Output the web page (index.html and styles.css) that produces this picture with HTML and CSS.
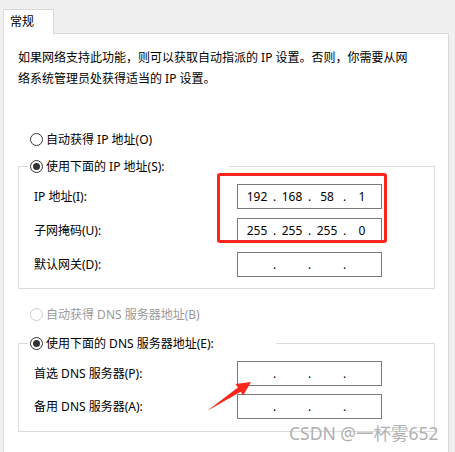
FILE: index.html
```html
<!DOCTYPE html>
<html lang="zh-CN">
<head>
<meta charset="utf-8">
<title>IP 设置</title>
<link rel="stylesheet" href="styles.css">
</head>
<body>
<div class="page">
  <div class="tabstrip">
    <div class="tab">常规</div>
  </div>
  <div class="panel">
    <p class="intro">如果网络支持此功能，则可以获取自动指派的 IP 设置。否则，你需要从网<br>络系统管理员处获得适当的 IP 设置。</p>

    <div class="radio-row first"><span class="radio"></span><span>自动获得 IP 地址(O)</span></div>

    <fieldset class="group group-ip">
      <legend class="legend legend-ip"><span class="radio checked"></span><span>使用下面的 IP 地址(S):</span></legend>
      <div class="fields">
        <span class="label">IP 地址(I):</span>
        <div class="ipbox"><span class="oct">192</span><span class="dot">.</span><span class="oct">168</span><span class="dot">.</span><span class="oct">58</span><span class="dot">.</span><span class="oct">1</span></div>
        <span class="label">子网掩码(U):</span>
        <div class="ipbox"><span class="oct">255</span><span class="dot">.</span><span class="oct">255</span><span class="dot">.</span><span class="oct">255</span><span class="dot">.</span><span class="oct">0</span></div>
        <span class="label">默认网关(D):</span>
        <div class="ipbox"><span class="oct"></span><span class="dot">.</span><span class="oct"></span><span class="dot">.</span><span class="oct"></span><span class="dot">.</span><span class="oct"></span></div>
      </div>
    </fieldset>

    <div class="radio-row disabled"><span class="radio"></span><span>自动获得 DNS 服务器地址(B)</span></div>

    <fieldset class="group group-dns">
      <legend class="legend legend-dns"><span class="radio checked"></span><span>使用下面的 DNS 服务器地址(E):</span></legend>
      <div class="fields dns-fields">
        <span class="label">首选 DNS 服务器(P):</span>
        <div class="ipbox"><span class="oct"></span><span class="dot">.</span><span class="oct"></span><span class="dot">.</span><span class="oct"></span><span class="dot">.</span><span class="oct"></span></div>
        <span class="label">备用 DNS 服务器(A):</span>
        <div class="ipbox"><span class="oct"></span><span class="dot">.</span><span class="oct"></span><span class="dot">.</span><span class="oct"></span><span class="dot">.</span><span class="oct"></span></div>
      </div>
    </fieldset>
  </div>

  <div class="highlight"></div>
  <svg class="arrow" width="48" height="34" viewBox="0 0 48 34" aria-hidden="true">
    <polygon points="46,2 30.5,3.9 32.9,7.6 2,31 35.7,11.8 38.1,15.5" fill="#f8261c"/>
  </svg>
  <div class="watermark">CSDN @一杯雾652</div>
</div>
</body>
</html>
```

FILE: styles.css
```css
html, body {
  margin: 0;
  padding: 0;
  background: #f0f0f0;
}

body {
  font-family: "Noto Sans", "Noto Sans CJK SC", sans-serif;
  font-size: 12px;
  color: #000;
}

.page {
  position: relative;
  width: 455px;
  height: 452px;
  overflow: hidden;
}

.tabstrip {
  display: flex;
  padding: 9px 0 0 3px;
}

.tab {
  position: relative;
  z-index: 1;
  width: 51px;
  height: 25px;
  box-sizing: border-box;
  border: 1px solid #d9d9d9;
  border-bottom: none;
  background: #fff;
  padding-left: 6px;
  line-height: 23px;
  margin-bottom: -1px;
}

.panel {
  margin-left: 3px;
  width: 446px;
  min-height: 430px;
  box-sizing: border-box;
  border: 1px solid #d9d9d9;
  background: #fff;
  padding: 13px 14px 0 14px;
}

.intro {
  margin: 0;
  line-height: 21px;
}

.radio-row {
  display: flex;
  align-items: center;
  gap: 3px;
  height: 20px;
  padding-left: 12px;
}

.radio-row.first {
  margin-top: 40px;
}

.radio-row.disabled {
  margin-top: 15px;
  color: #9a9a9a;
}

.radio {
  display: flex;
  align-items: center;
  justify-content: center;
  width: 13px;
  height: 13px;
  box-sizing: border-box;
  border: 1px solid #333;
  border-radius: 50%;
  background: #fff;
  flex: none;
}

.radio.checked::after {
  content: "";
  width: 7px;
  height: 7px;
  border-radius: 50%;
  background: #333;
}

.disabled .radio {
  border-color: #cccccc;
}

.group {
  margin: 7px 0 0 0;
  padding: 8px 0 11px 0;
  width: 417px;
  box-sizing: border-box;
  border: 1px solid #dcdcdc;
  min-inline-size: 0;
}

.group-dns {
  margin-top: 9px;
  padding-bottom: 12px;
}

.legend {
  display: flex;
  align-items: center;
  gap: 3px;
  height: 20px;
  box-sizing: border-box;
  padding: 0 0 0 2px;
  margin-left: 9px;
}

.legend-ip {
  width: 201px;
}

.legend-dns {
  width: 248px;
}

.fields {
  display: grid;
  grid-template-columns: 203px 145px;
  row-gap: 9px;
  align-items: center;
  padding-left: 15px;
}

.dns-fields {
  row-gap: 8px;
}

.label {
  line-height: 20px;
}

.ipbox {
  display: flex;
  align-items: center;
  height: 25px;
  box-sizing: border-box;
  border: 1px solid #7a7a7a;
  padding-left: 5px;
  background: #fff;
}

.oct {
  width: 28px;
  text-align: center;
  line-height: 23px;
}

.dot {
  width: 7px;
  text-align: center;
  line-height: 23px;
}

.highlight {
  position: absolute;
  left: 217px;
  top: 173px;
  width: 170px;
  height: 70px;
  box-sizing: border-box;
  border: 3px solid #f8261c;
  border-radius: 3px;
}

.arrow {
  position: absolute;
  left: 205px;
  top: 380px;
}

.watermark {
  position: absolute;
  left: 289px;
  top: 422px;
  font-size: 17.5px;
  line-height: 23px;
  color: #b0b0b0;
  white-space: nowrap;
}
```
